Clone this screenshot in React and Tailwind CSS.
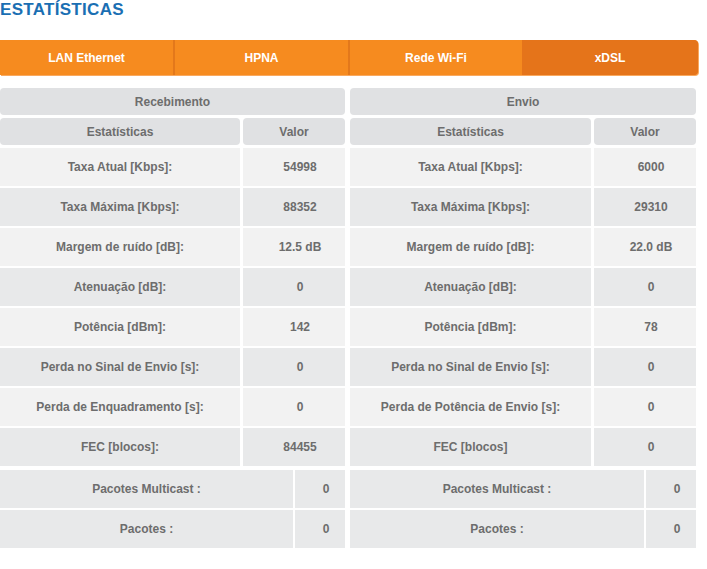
const tabs = [
  { label: 'LAN Ethernet', w: 'w-[173px]' },
  { label: 'HPNA', w: 'w-[175px]' },
  { label: 'Rede Wi-Fi', w: 'w-[174px]' },
  { label: 'xDSL', w: 'flex-1' },
];

const rx = [
  ['Taxa Atual [Kbps]:', '54998'],
  ['Taxa Máxima [Kbps]:', '88352'],
  ['Margem de ruído [dB]:', '12.5 dB'],
  ['Atenuação [dB]:', '0'],
  ['Potência [dBm]:', '142'],
  ['Perda no Sinal de Envio [s]:', '0'],
  ['Perda de Enquadramento [s]:', '0'],
  ['FEC [blocos]:', '84455'],
];

const tx = [
  ['Taxa Atual [Kbps]:', '6000'],
  ['Taxa Máxima [Kbps]:', '29310'],
  ['Margem de ruído [dB]:', '22.0 dB'],
  ['Atenuação [dB]:', '0'],
  ['Potência [dBm]:', '78'],
  ['Perda no Sinal de Envio [s]:', '0'],
  ['Perda de Potência de Envio [s]:', '0'],
  ['FEC [blocos]', '0'],
];

function StatsTable({ title, rows }) {
  return (
    <div className="flex flex-col">
      <div className="h-[27px] flex items-center justify-center rounded-[4px] bg-[#e0e1e3]">{title}</div>
      <div className="mt-[3px] grid grid-cols-[1fr_102px] gap-x-[3px]">
        <div className="h-[27px] flex items-center justify-center rounded-[4px] bg-[#e0e1e3]">Estatísticas</div>
        <div className="h-[27px] flex items-center justify-center rounded-[4px] bg-[#e0e1e3]">Valor</div>
      </div>
      <div className="mt-[3px] grid grid-cols-[1fr_102px] gap-x-[3px] gap-y-[2px]">
        {rows.map(([label, value], i) => {
          const bg = i % 2 === 0 ? 'bg-[#f2f2f2]' : 'bg-[#e8e9ea]';
          return [
            <div key={label} className={`h-[38px] flex items-center justify-center ${bg}`}>{label}</div>,
            <div key={label + '-v'} className={`h-[38px] flex items-center justify-center pl-3 ${bg}`}>{value}</div>,
          ];
        })}
      </div>
    </div>
  );
}

function PacketsTable() {
  return (
    <div className="grid grid-cols-[1fr_50px] gap-x-[2px] gap-y-[2px]">
      <div className="h-[38px] flex items-center justify-center bg-[#e8e9ea]">Pacotes Multicast :</div>
      <div className="h-[38px] flex items-center justify-center pl-3 bg-[#e8e9ea]">0</div>
      <div className="h-[38px] flex items-center justify-center bg-[#e8e9ea]">Pacotes :</div>
      <div className="h-[38px] flex items-center justify-center pl-3 bg-[#e8e9ea]">0</div>
    </div>
  );
}

export default function App() {
  return (
    <div className="w-[707px] h-[569px] bg-white font-['Liberation_Sans',Arial,sans-serif]">
      <h1 className="text-[17px] leading-[20px] font-bold text-[#1a6fb3] tracking-[0.3px]">ESTATÍSTICAS</h1>

      <div className="mt-[20px] w-[698px] h-[35px] flex rounded-r-[4px] bg-[#f68b1f] shadow-[1px_1px_0_#f9a95f] overflow-hidden">
        {tabs.map((t, i) => (
          <div
            key={t.label}
            className={`${t.w} flex items-center justify-center text-white text-[12px] font-bold ${
              i === 3 ? 'bg-[#e5741a]' : ''
            } ${i === 1 || i === 2 ? 'border-l-2 border-[#e3781b]' : ''}`}
          >
            {t.label}
          </div>
        ))}
      </div>

      <div className="mt-[13px] w-[696px] grid grid-cols-[345px_346px] gap-x-[5px] text-[12px] font-bold text-[#6d6d6d]">
        <StatsTable title="Recebimento" rows={rx} />
        <StatsTable title="Envio" rows={tx} />
        <div className="mt-[4px]">
          <PacketsTable />
        </div>
        <div className="mt-[4px]">
          <PacketsTable />
        </div>
      </div>
    </div>
  );
}
